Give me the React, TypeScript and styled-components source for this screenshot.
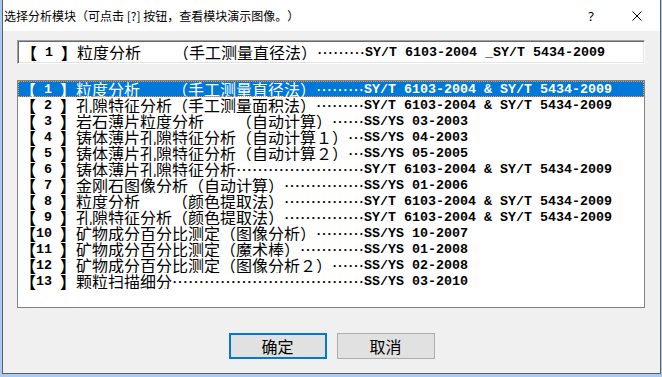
import React from 'react';
import styled, { createGlobalStyle } from 'styled-components';

const GlobalStyle = createGlobalStyle`
  * {
    box-sizing: border-box;
  }

  html, body {
    margin: 0;
    padding: 0;
    background: #a9cbf2;
  }

  body {
    width: 662px;
    height: 377px;
    overflow: hidden;
    text-spacing-trim: space-all;
  }
`;

const CJK = '"Noto Sans CJK SC", "Noto Sans", sans-serif';
const MONO = '"Liberation Mono", "DejaVu Sans Mono", monospace';

const Window = styled.div`
  margin-left: 2px;
  width: 659px;
  height: 374px;
  background: #f0f0f0;
  border: 1px solid #5e5e5e;
  border-top: none;
  display: flex;
  flex-direction: column;
`;

const TitleBar = styled.div`
  height: 31px;
  background: #ffffff;
  display: flex;
  align-items: center;
  padding-left: 1px;
`;

const Title = styled.div`
  flex: 1;
  font-family: ${CJK};
  font-size: 12px;
  color: #000;
  white-space: nowrap;
`;

const CaptionButton = styled.div`
  width: 46px;
  height: 31px;
  display: flex;
  align-items: center;
  justify-content: center;
  font-family: "Noto Sans", sans-serif;
  font-size: 13px;
  color: #000;
`;

const Content = styled.div`
  flex: 1;
  display: flex;
  flex-direction: column;
  padding: 9px 14px 0 14px;
`;

const SelectedBox = styled.div`
  width: 628px;
  height: 24px;
  background: #ffffff;
  border-top: 1px solid #a0a0a0;
  border-left: 1px solid #a0a0a0;
  border-bottom: 1px solid #ffffff;
  border-right: 1px solid #ffffff;
  box-shadow: inset 1px 1px 0 #696969, inset -1px -1px 0 #e3e3e3;
  padding: 3px 0 0 1px;
  margin-bottom: 16px;
`;

const ListBox = styled.div`
  width: 628px;
  height: 228px;
  background: #ffffff;
  border: 1px solid #828282;
  display: flex;
  flex-direction: column;
`;

const Row = styled.div<{ $selected?: boolean }>`
  height: 16px;
  display: flex;
  align-items: flex-start;
  padding-left: 2px;
  color: ${(p) => (p.$selected ? '#ffffff' : '#000000')};
  background: ${(p) => (p.$selected ? '#0078d7' : 'transparent')};
  outline: ${(p) => (p.$selected ? '1px dotted #ff9a3c' : 'none')};
  outline-offset: -1px;
  white-space: pre;
  text-spacing-trim: space-all;
`;

const Bracket = styled.span`
  width: 16px;
  flex: none;
  font-family: ${CJK};
  font-weight: bold;
  font-size: 16px;
  line-height: 16px;
`;

const Num = styled.span`
  width: 24px;
  flex: none;
  font-family: ${MONO};
  font-weight: bold;
  font-size: 13.33px;
  line-height: 16px;
  margin-top: 1px;
`;

const NameCol = styled.span`
  width: 288px;
  flex: none;
  overflow: hidden;
  font-family: ${CJK};
  font-size: 16px;
  line-height: 16px;
`;

const Std = styled.span`
  flex: none;
  font-family: ${MONO};
  font-weight: bold;
  font-size: 13.33px;
  line-height: 16px;
  margin-top: 1px;
`;

const ButtonRow = styled.div`
  display: flex;
  justify-content: center;
  gap: 10px;
  margin-top: 25px;
`;

const DialogButton = styled.button<{ $default?: boolean }>`
  width: 98px;
  height: 26px;
  padding: 0;
  background: #e1e1e1;
  border: ${(p) => (p.$default ? '2px solid #0078d7' : '1px solid #adadad')};
  font-family: ${CJK};
  font-size: 16px;
  line-height: 16px;
  color: #000;
`;

type Module = { name: string; std: string };

const SY = 'SY/T 6103-2004 & SY/T 5434-2009';

const modules: Module[] = [
  { name: '粒度分析　　（手工测量直径法）', std: SY },
  { name: '孔隙特征分析（手工测量面积法）', std: SY },
  { name: '岩石薄片粒度分析　　（自动计算）', std: 'SS/YS 03-2003' },
  { name: '铸体薄片孔隙特征分析（自动计算１）', std: 'SS/YS 04-2003' },
  { name: '铸体薄片孔隙特征分析（自动计算２）', std: 'SS/YS 05-2005' },
  { name: '铸体薄片孔隙特征分析', std: SY },
  { name: '金刚石图像分析（自动计算）', std: 'SS/YS 01-2006' },
  { name: '粒度分析　　（颜色提取法）', std: SY },
  { name: '孔隙特征分析（颜色提取法）', std: SY },
  { name: '矿物成分百分比测定（图像分析）', std: 'SS/YS 10-2007' },
  { name: '矿物成分百分比测定（魔术棒）', std: 'SS/YS 01-2008' },
  { name: '矿物成分百分比测定（图像分析２）', std: 'SS/YS 02-2008' },
  { name: '颗粒扫描细分', std: 'SS/YS 03-2010' },
];

// every name char is full width (16px); the column holds 18 of them
const withLeader = (name: string) => name + '…'.repeat(Math.max(0, 18 - name.length));

const ModuleLine: React.FC<{ n: number; m: Module; selected?: boolean }> = ({ n, m, selected }) => (
  <Row $selected={selected}>
    <Bracket>【</Bracket>
    <Num>{n < 10 ? ` ${n} ` : `${n} `}</Num>
    <Bracket>】</Bracket>
    <NameCol>{withLeader(m.name)}</NameCol>
    <Std>{m.std}</Std>
  </Row>
);

export default function App() {
  return (
    <>
      <GlobalStyle />
      <Window>
        <TitleBar>
          <Title>选择分析模块（可点击 [?] 按钮，查看模块演示图像。）</Title>
          <CaptionButton>?</CaptionButton>
          <CaptionButton>
            <svg width="10" height="10" viewBox="0 0 10 10">
              <path d="M0.5 0.5 L9.5 9.5 M9.5 0.5 L0.5 9.5" stroke="#000" strokeWidth="1" fill="none" />
            </svg>
          </CaptionButton>
        </TitleBar>
        <Content>
          <SelectedBox>
            <ModuleLine n={1} m={{ name: modules[0].name, std: 'SY/T 6103-2004 _SY/T 5434-2009' }} />
          </SelectedBox>
          <ListBox>
            {modules.map((m, i) => (
              <ModuleLine key={i} n={i + 1} m={m} selected={i === 0} />
            ))}
          </ListBox>
          <ButtonRow>
            <DialogButton $default>确定</DialogButton>
            <DialogButton>取消</DialogButton>
          </ButtonRow>
        </Content>
      </Window>
    </>
  );
}
